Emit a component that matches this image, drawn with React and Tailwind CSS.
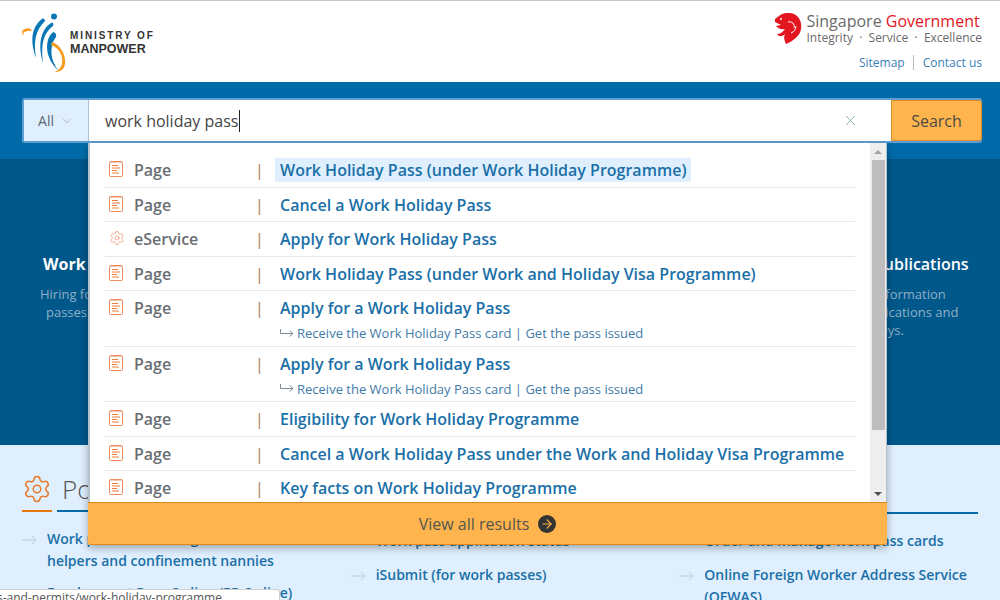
import React from 'react';
import { ChevronDown, X, ArrowRight, Settings } from 'lucide-react';

const results = [
  { type: 'Page', title: 'Work Holiday Pass (under Work Holiday Programme)', active: true },
  { type: 'Page', title: 'Cancel a Work Holiday Pass' },
  { type: 'eService', title: 'Apply for Work Holiday Pass' },
  { type: 'Page', title: 'Work Holiday Pass (under Work and Holiday Visa Programme)' },
  { type: 'Page', title: 'Apply for a Work Holiday Pass', sub: 'Receive the Work Holiday Pass card | Get the pass issued' },
  { type: 'Page', title: 'Apply for a Work Holiday Pass', sub: 'Receive the Work Holiday Pass card | Get the pass issued' },
  { type: 'Page', title: 'Eligibility for Work Holiday Programme' },
  { type: 'Page', title: 'Cancel a Work Holiday Pass under the Work and Holiday Visa Programme' },
  { type: 'Page', title: 'Key facts on Work Holiday Programme', last: true },
];

function MomLogo() {
  return (
    <svg width="48" height="62" viewBox="0 0 48 62" className="shrink-0">
      <circle cx="33" cy="4.5" r="3" fill="#0a76b5" />
      <path d="M1 19 C4 16 9 15 11 19 C10 19 7 18 4 20 Z M1 19 L2 24 L3 20 Z" fill="#f59b20" />
      <path d="M21 7 C12 14 8 26 15 46 C12 28 15 18 24 9 C24 7 22 6 21 7 Z" fill="#0a76b5" />
      <path d="M30 11 C21 17 16 30 22 51 C20 32 22 22 32 14 C33 12 32 10 30 11 Z" fill="#0a76b5" />
      <path d="M31 21 C24 28 23 46 38 59 C28 47 29 33 35 25 C36 22 33 19 31 21 Z" fill="#0a76b5" />
      <path d="M31 30 C42 34 45 46 44 52 C43 58 39 60 34 60 C40 57 42 52 41 46 C40 40 36 35 30 33 Z" fill="#f59b20" />
    </svg>
  );
}

function Merlion() {
  return (
    <svg width="28" height="32" viewBox="0 0 28 32" className="shrink-0">
      <path d="M1 6 L5 3 C8 0 15 -1 20 1 C26 4 28 10 27 16 C26 23 19 28 12 31 C11 28 9 25 11 21 C8 24 5 24 3 21 C6 21 9 19 11 16 C7 17 4 15 2 13 L7 12 L3 10 L1 9 Z" fill="#e3151f" />
      <path d="M14 9 C18 8 21 11 20 15 M17 20 C20 19 22 16 22 13" stroke="#fff" strokeWidth="1" fill="none" />
      <circle cx="7" cy="6" r="1" fill="#fff" />
    </svg>
  );
}

function PageIcon() {
  return (
    <svg width="14" height="17" viewBox="0 0 14 17" fill="none" className="shrink-0">
      <rect x="0.5" y="0.5" width="13" height="15" rx="1" fill="#fff" stroke="#ee8a5c" />
      <rect x="1" y="1" width="12" height="1" fill="#f5c9b1" />
      <path d="M3 4.5H9M3 7H11M3 9.5H8M3 12H10" stroke="#ee7d3c" strokeWidth="1" />
    </svg>
  );
}

function GearIcon({ size, color, stroke }) {
  return <Settings size={size} color={color} strokeWidth={stroke} className="shrink-0" />;
}

function ThinArrow({ className }) {
  return (
    <svg width="15" height="10" viewBox="0 0 15 10" fill="none" className={className}>
      <path d="M0 5H14M10 1L14 5L10 9" stroke="#b4cfe3" strokeWidth="1" />
    </svg>
  );
}

function LinkItem({ children }) {
  return (
    <div className="flex items-start gap-[10px] text-[14px] leading-[22px] font-semibold text-[#1a6fa8]">
      <ThinArrow className="mt-[7px] shrink-0" />
      <span>{children}</span>
    </div>
  );
}

function ResultRow({ item }) {
  const height = item.sub ? 'h-[55.5px]' : 'h-[34.5px]';
  return (
    <div className={`flex items-start ${height} ${item.last ? '' : 'border-b border-[#e8e8e8]'}`}>
      <div className="w-[29px] pl-[4px] pt-[8px]">
        {item.type === 'Page' ? <PageIcon /> : <GearIcon size={16} color="#ee8a5c" stroke={1} />}
      </div>
      <div className="w-[121px] text-[16px] leading-[34px] font-semibold text-[#6a6e73]">{item.type}</div>
      <div className="w-[25px] text-[16px] leading-[34px] text-[#a97d5b]">|</div>
      <div className="min-w-0">
        <div className="-ml-[5px] flex">
          <span className={`px-[5px] text-[16px] leading-[24px] mt-[5px] font-semibold whitespace-nowrap text-[#1a6fa8] ${item.active ? 'bg-[#dfeffd]' : ''}`}>
            {item.title}
          </span>
        </div>
        {item.sub && (
          <div className="flex items-center gap-[3px] text-[13px] leading-[18px] mt-[4px] text-[#3f7ba6] whitespace-nowrap">
            <svg width="14" height="9" viewBox="0 0 14 9" fill="none" className="shrink-0">
              <path d="M0.5 0V4.5H13M9.5 1.5L13 4.5L9.5 7.5" stroke="#7d8b97" strokeWidth="1" />
            </svg>
            {item.sub}
          </div>
        )}
      </div>
    </div>
  );
}

function SearchPanel() {
  return (
    <div className="absolute left-[22px] top-[98px] w-[960px]">
      <div className="flex h-[45px] rounded-[3px] border-2 border-[#5d9fd3] bg-white">
        <div className="flex w-[65px] items-center justify-center gap-[6px] border-r border-[#a9c4da] bg-[#dfeffd] text-[14px] text-[#5d6770]">
          All <ChevronDown size={14} strokeWidth={1} color="#8a96a8" />
        </div>
        <div className="flex flex-1 items-center pl-[16px] text-[16px] text-[#444]">
          work holiday pass<span className="ml-[1px] h-[22px] w-px bg-[#222]" />
        </div>
        <div className="flex w-[49px] items-center">
          <X size={17} strokeWidth={1} color="#5f9c8f" />
        </div>
        <div className="flex w-[91px] items-center justify-center -mr-[2px] rounded-r-[3px] border border-[#d98d2a] bg-[#ffb44d] text-[16px] text-[#4a4a44]">
          Search
        </div>
      </div>
      <div className="absolute left-[66px] top-[45px] w-[799px] border-l-2 border-r border-[#b4c2cf] bg-white shadow-[0_3px_8px_rgba(0,0,0,0.3)]">
        <div className="flex h-[359px]">
          <div className="flex-1 min-w-0 overflow-hidden px-[15px] pt-[10px]">
            {results.map((item, i) => (
              <ResultRow key={i} item={item} />
            ))}
          </div>
          <div className="flex w-[16px] flex-col items-center bg-[#eeeeee]">
            <div className="flex h-[17px] items-center">
              <div className="h-0 w-0 border-x-[4px] border-b-[4px] border-x-transparent border-b-[#a3a3a3]" />
            </div>
            <div className="h-[270px] w-[13px] bg-[#bdbdbd]" />
            <div className="mt-auto flex h-[17px] items-center">
              <div className="h-0 w-0 border-x-[4px] border-t-[4px] border-x-transparent border-t-[#505050]" />
            </div>
          </div>
        </div>
        <div className="flex h-[43px] -ml-[2px] -mr-px items-center justify-center gap-[9px] rounded-b-[3px] border-y border-[#dd8a1a] bg-[#ffb44d] text-[16px] text-[#54544e]">
          View all results
          <span className="flex h-[18px] w-[18px] items-center justify-center rounded-full bg-[#333333]">
            <ArrowRight size={14} strokeWidth={2} color="#ffb44d" />
          </span>
        </div>
      </div>
    </div>
  );
}

export default function App() {
  return (
    <div className="relative h-[600px] w-[1000px] overflow-hidden font-['Open_Sans',sans-serif] bg-white">
      <div className="h-[82px] border-t border-[#c4c4c4] bg-white">
        <div className="flex justify-between pl-[21px] pr-[18px]">
          <div className="flex items-start pt-[11px]">
            <MomLogo />
            <div className="ml-[1px] mt-[17px] font-['Liberation_Sans',sans-serif] text-[#333]">
              <div className="text-[10px] leading-[13px] tracking-[1.9px] font-bold">MINISTRY OF</div>
              <div className="text-[12.5px] leading-[14px] font-bold">MANPOWER</div>
            </div>
          </div>
          <div className="flex flex-col items-end pt-[12px]">
            <div className="flex items-start gap-[4px]">
              <Merlion />
              <div>
                <div className="text-[16px] leading-[17px] text-[#6a6a6a]">
                  Singapore <span className="text-[#e3151f]">Government</span>
                </div>
                <div className="text-[12px] leading-[15px] text-[#6a6a6a]">Integrity &nbsp;·&nbsp; Service &nbsp;·&nbsp; Excellence</div>
              </div>
            </div>
            <div className="mt-[10px] flex items-center text-[12px] leading-[15px] text-[#3a7fb5]">
              <span className="border-r border-[#bbb] pr-[8px]">Sitemap</span>
              <span className="pl-[9px]">Contact us</span>
            </div>
          </div>
        </div>
      </div>

      <div className="h-[77px] bg-[#006ba8]" />

      <div className="flex h-[286px] justify-between bg-[#00578a] pl-[43px] pr-[26px] pt-[95px]">
        <div className="w-[120px]">
          <div className="text-[16px] leading-[20px] font-bold text-white">Work passes</div>
          <div className="mt-[11px] -ml-[3px] text-[13px] leading-[18px] text-[#8fb0c7]">
            Hiring foreign<br />
            <span className="ml-[6px]">passes and</span>
          </div>
        </div>
        <div className="w-[100px] overflow-hidden">
          <div className="text-[16px] leading-[20px] font-semibold text-white whitespace-nowrap">Publications</div>
          <div className="mt-[11px] text-[13px] leading-[18px] text-[#8fb0c7] whitespace-nowrap">
            information<br />
            blications and<br />
            veys.
          </div>
        </div>
      </div>

      <div className="grid h-[155px] grid-cols-3 gap-[30px] bg-[#dfeffd] px-[22px] pt-[24px]">
        <div>
          <div className="flex items-center gap-[10px]">
            <GearIcon size={30} color="#e8772e" stroke={1.2} />
            <span className="text-[26px] leading-[40px] font-light text-[#555]">Popular</span>
          </div>
          <div className="mb-[16px] mt-[1px] flex gap-[5px]">
            <div className="h-[2px] w-[30px] bg-[#e5770f]" />
            <div className="h-[2px] flex-1 bg-[#006ba8]" />
          </div>
          <LinkItem>Work permit for foreign domestic helpers and confinement nannies</LinkItem>
          <div className="mt-[10px]"><LinkItem>Employment Pass Online (EP Online)</LinkItem></div>
        </div>
        <div className="pt-[43px]">
          <div className="mb-[16px] h-[2px] bg-[#006ba8]" />
          <LinkItem>Work pass application status</LinkItem>
          <div className="mt-[12px]"><LinkItem>iSubmit (for work passes)</LinkItem></div>
          <div className="mt-[10px]"><LinkItem>Check status of work pass</LinkItem></div>
        </div>
        <div className="pt-[43px]">
          <div className="mb-[16px] h-[2px] bg-[#006ba8]" />
          <LinkItem>Order and manage work pass cards</LinkItem>
          <div className="mt-[12px]"><LinkItem>Online Foreign Worker Address Service (OFWAS)</LinkItem></div>
        </div>
      </div>

      <SearchPanel />

      <div className="absolute bottom-0 left-0 h-[11px] w-[280px] overflow-hidden rounded-tr-[3px] border-r border-t border-[#d0d0d0] bg-white">
        <div className="whitespace-nowrap -ml-[3px] text-[12px] leading-[16px] text-[#555]">s-and-permits/work-holiday-programme</div>
      </div>
    </div>
  );
}
